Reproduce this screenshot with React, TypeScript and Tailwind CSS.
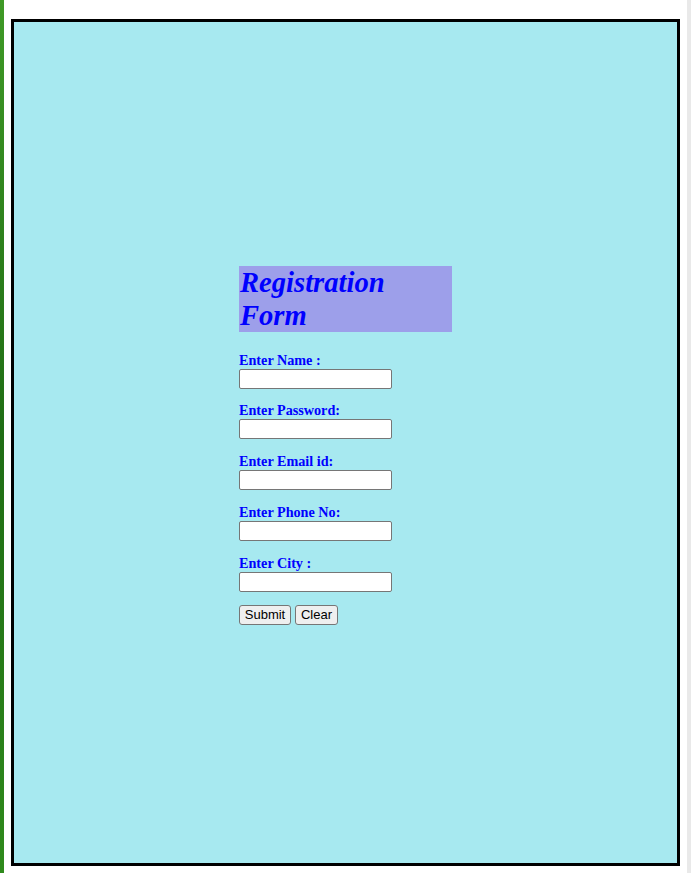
import React from 'react'

const fields = [
  { label: 'Enter Name :', type: 'text', h: 'h-[50px]' },
  { label: 'Enter Password:', type: 'password', h: 'h-[51px]' },
  { label: 'Enter Email id:', type: 'email', h: 'h-[51px]' },
  { label: 'Enter Phone No:', type: 'text', h: 'h-[51px]' },
  { label: 'Enter City :', type: 'text', h: 'h-[50px]' },
]

export default function App() {
  return (
    <div className="flex h-[873px] w-[691px] overflow-hidden bg-white">
      {/* background image edge */}
      <div className="h-full w-[4px] bg-gradient-to-b from-[#3f9a26] via-[#1f6d14] to-[#2f8a1c]" />

      <div className="flex flex-1 pl-[7px] pt-[19px]">
        <div className="box-border h-[847px] w-[669px] border-[3px] border-black bg-[#a7e9f0]">
          <div className="flex flex-col items-center pt-[244px]">
            <form className="flex w-[213px] flex-col" onSubmit={(e) => e.preventDefault()}>
              <h1 className="h-[66px] bg-[#9d9fea] pl-[1px] font-['Liberation_Serif',serif] text-[28.6px] leading-[33px] font-bold italic text-[#0000ff]">
                Registration Form
              </h1>

              <div className="mt-[20px] flex flex-col">
                {fields.map((f) => (
                  <div key={f.label} className={'flex flex-col ' + f.h}>
                    <label className="h-[17px] font-['Liberation_Serif',serif] text-[14.2px] leading-[17px] font-bold text-[#0000ff]">
                      {f.label}
                    </label>
                    <input
                      type={f.type}
                      className="box-border h-[20px] w-[153px] rounded-[2px] border border-[#767676] bg-white px-[2px] text-[13px] outline-none"
                    />
                  </div>
                ))}
              </div>

              <div className="flex gap-[4px]">
                <button
                  type="submit"
                  className="box-border h-[20px] w-[52px] rounded-[3px] border border-[#767676] bg-[#efefef] font-['Liberation_Sans',Arial,sans-serif] text-[13px] leading-[18px] text-black"
                >
                  Submit
                </button>
                <button
                  type="reset"
                  className="box-border h-[20px] w-[43px] rounded-[3px] border border-[#767676] bg-[#efefef] font-['Liberation_Sans',Arial,sans-serif] text-[13px] leading-[18px] text-black"
                >
                  Clear
                </button>
              </div>
            </form>
          </div>
        </div>
      </div>

      {/* scrollbar edge */}
      <div className="h-full w-[4px] bg-[#e9e9e9]" />
    </div>
  )
}
